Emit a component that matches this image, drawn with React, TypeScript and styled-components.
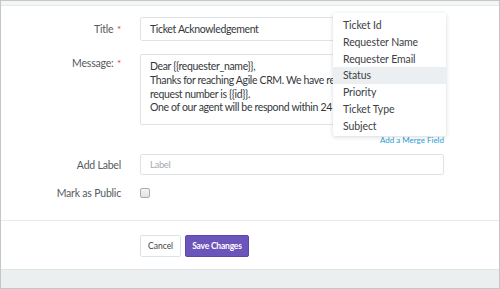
import React from "react";
import styled, { createGlobalStyle } from "styled-components";

const GlobalStyle = createGlobalStyle`
  html, body {
    margin: 0;
    padding: 0;
    background: #ffffff;
  }
  body {
    font-family: Lato, "Open Sans", sans-serif;
  }
`;

const MERGE_FIELDS = [
  "Ticket Id",
  "Requester Name",
  "Requester Email",
  "Status",
  "Priority",
  "Ticket Type",
  "Subject",
];

const MESSAGE_LINES = [
  "Dear {{requester_name}},",
  "Thanks for reaching Agile CRM. We have received your request and your",
  "request number is {{id}}.",
  "One of our agent will be respond within 24 hours.",
];

export default function App(): JSX.Element {
  return (
    <>
      <GlobalStyle />
      <Frame>
        <TopBand />
        <FormBody>
          <Row>
            <Label>
              Title <Star>*</Star>
            </Label>
            <Input value="Ticket Acknowledgement" readOnly />
          </Row>
          <Row align="start" gapBelow={9}>
            <Label top>
              Message: <Star>*</Star>
            </Label>
            <Field>
              <TextBox>
                {MESSAGE_LINES.map((line) => (
                  <Line key={line}>{line}</Line>
                ))}
              </TextBox>
              <MergeLink href="#">Add a Merge Field</MergeLink>
            </Field>
          </Row>
          <Row gapBelow={12}>
            <Label>Add Label</Label>
            <Input small placeholder="Label" />
          </Row>
          <Row>
            <Label>Mark as Public</Label>
            <Check />
          </Row>

          <MergeMenu>
            {MERGE_FIELDS.map((f) => (
              <MenuItem key={f} active={f === "Status"}>
                {f}
              </MenuItem>
            ))}
          </MergeMenu>
        </FormBody>
        <Actions>
          <CancelButton>Cancel</CancelButton>
          <SaveButton>Save Changes</SaveButton>
        </Actions>
        <BottomBand />
      </Frame>
    </>
  );
}

const Frame = styled.div`
  width: 500px;
  height: 289px;
  box-sizing: border-box;
  border: 1px solid #c4c6c8;
  display: flex;
  flex-direction: column;
  overflow: hidden;
  background: #ffffff;
`;

const TopBand = styled.div`
  height: 4px;
  background: #f4f6f6;
  border-bottom: 1px solid #e6e9ea;
`;

const FormBody = styled.div`
  position: relative;
  padding: 11px 0 0;
  display: flex;
  flex-direction: column;
  border-bottom: 1px solid #e8eaeb;
  height: 215px;
  box-sizing: border-box;
`;

const Row = styled.div<{ align?: string; gapBelow?: number }>`
  display: grid;
  grid-template-columns: 120px 304px;
  column-gap: 19px;
  align-items: ${(p) => p.align || "center"};
  margin-bottom: ${(p) => p.gapBelow ?? 13}px;
`;

const Label = styled.div<{ top?: boolean }>`
  text-align: right;
  font-size: 10.5px;
  letter-spacing: -0.2px;
  color: #555a5e;
  padding-top: ${(p) => (p.top ? "3px" : "0")};
`;

const Star = styled.span`
  color: #e8363a;
  font-size: 10px;
  margin-left: 1px;
`;

const Input = styled.input<{ small?: boolean }>`
  box-sizing: border-box;
  width: 304px;
  height: ${(p) => (p.small ? "21px" : "24px")};
  border: 1px solid #dde3e8;
  border-radius: 2px;
  padding: 0 9px;
  font-family: Lato, "Open Sans", sans-serif;
  font-size: ${(p) => (p.small ? "9.5px" : "10.5px")};
  letter-spacing: -0.35px;
  color: #34383c;
  outline: none;

  &::placeholder {
    color: #a5abb0;
  }
`;

const Field = styled.div`
  display: flex;
  flex-direction: column;
`;

const TextBox = styled.div`
  box-sizing: border-box;
  width: 304px;
  height: 71px;
  border: 1px solid #dde3e8;
  border-radius: 2px;
  padding: 5px 9px;
  overflow: hidden;
  font-size: 10.5px;
  letter-spacing: -0.35px;
  color: #34383c;
`;

const Line = styled.div`
  white-space: nowrap;
  line-height: 13.8px;
`;

const MergeLink = styled.a`
  align-self: flex-end;
  margin-top: 10px;
  font-size: 8px;
  line-height: 10px;
  color: #2d9fd9;
  text-decoration: none;
`;

const Check = styled.span`
  display: block;
  width: 8px;
  height: 8px;
  border: 1px solid #a8adb2;
  border-radius: 2px;
  background: linear-gradient(#f3f4f5, #dfe2e4);
`;

const MergeMenu = styled.ul`
  position: absolute;
  left: 332px;
  top: 7px;
  width: 113px;
  margin: 0;
  padding: 4px 0 1px;
  list-style: none;
  background: #ffffff;
  border-radius: 2px;
  box-shadow: 0 1px 4px rgba(0, 0, 0, 0.16);
`;

const MenuItem = styled.li<{ active?: boolean }>`
  height: 16.8px;
  line-height: 16.8px;
  padding-left: 10px;
  font-size: 10.5px;
  letter-spacing: -0.1px;
  color: #3c4146;
  background: ${(p) => (p.active ? "#eceff1" : "transparent")};
`;

const Actions = styled.div`
  display: flex;
  gap: 4px;
  padding: 14px 0 0 139px;
  height: 48px;
  box-sizing: border-box;
`;

const CancelButton = styled.button`
  height: 22px;
  padding: 0 7px;
  border: 1px solid #dde2e6;
  border-radius: 2px;
  background: #ffffff;
  font-family: Lato, "Open Sans", sans-serif;
  font-size: 8.5px;
  color: #3c4146;
`;

const SaveButton = styled.button`
  height: 22px;
  padding: 0 6px;
  border: 1px solid #5e46ad;
  border-radius: 2px;
  background: #6b54ba;
  font-family: Lato, "Open Sans", sans-serif;
  font-size: 8.5px;
  font-weight: bold;
  letter-spacing: -0.2px;
  color: #ffffff;
`;

const BottomBand = styled.div`
  flex: 1;
  background: #eceff0;
  border-top: 1px solid #e0e4e6;
`;
